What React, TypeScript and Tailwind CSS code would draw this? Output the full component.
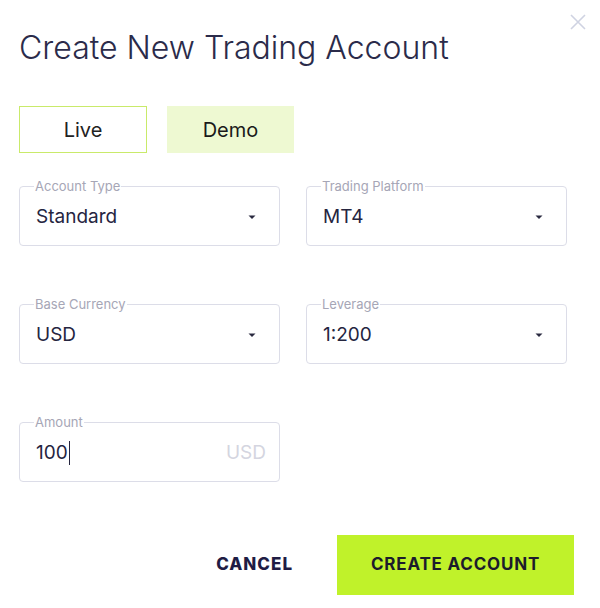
import React from "react";

const font = { fontFamily: "Inter, 'Noto Sans', sans-serif" };

function Caret() {
  return (
    <svg width="10" height="6" viewBox="0 0 10 6" className="shrink-0">
      <path d="M1.5 1.5h7L5 5z" fill="#2a2a40" />
    </svg>
  );
}

function Field({
  label,
  value,
  select = true,
  suffix,
  caret = false,
}: {
  label: string;
  value: string;
  select?: boolean;
  suffix?: string;
  caret?: boolean;
}) {
  return (
    <fieldset className="h-[68px] w-[261px] rounded-[4px] border border-[#dcdde8] pl-[16px] pr-[22px]">
      <legend className="-ml-[2px] px-[1px] text-[13px] leading-[16px] text-[#a6a6b6]">{label}</legend>
      <div className="mt-[2px] flex h-[42px] items-center justify-between">
        <span className="flex items-center text-[19px] text-[#25253f]">
          {value}
          {caret && <span className="ml-[1px] inline-block h-[24px] w-[1.5px] bg-[#25253f]" />}
        </span>
        {select && <Caret />}
        {suffix && <span className="-mr-[9px] text-[19px] text-[#d4d5e0]">{suffix}</span>}
      </div>
    </fieldset>
  );
}

export default function App() {
  return (
    <div className="relative h-[608px] w-[600px] bg-white" style={font}>
      <button className="absolute right-[12px] top-[12px] text-[#cfd3e2]">
        <svg width="20" height="20" viewBox="0 0 20 20">
          <path d="M3 3l14 14M17 3L3 17" stroke="currentColor" strokeWidth="1.6" />
        </svg>
      </button>

      <div className="px-[19px] pt-[26px]">
        <h1 className="text-[32px] font-light leading-[44px] text-[#2b2b4a]">
          Create New Trading Account
        </h1>

        <div className="mt-[36px] flex gap-[20px]">
          <button className="h-[47px] w-[128px] border-[1.5px] border-[#c9ea6a] text-[20px] text-[#222]">
            Live
          </button>
          <button className="h-[47px] w-[127px] bg-[#eef9d2] text-[20px] text-[#1a1a1a]">Demo</button>
        </div>

        <div className="mt-[25px] grid grid-cols-[261px_261px] gap-x-[26px] gap-y-[50px]">
          <Field label="Account Type" value="Standard" />
          <Field label="Trading Platform" value="MT4" />
          <Field label="Base Currency" value="USD" />
          <Field label="Leverage" value="1:200" />
          <Field label="Amount" value="100" select={false} suffix="USD" caret />
        </div>

        <div className="mt-[53px] flex items-center justify-end gap-[44px] pr-[7px]">
          <button className="text-[17px] font-extrabold tracking-[1px] text-[#1f1c44]">CANCEL</button>
          <button className="h-[60px] w-[237px] bg-[#c0f22a] text-[17px] font-bold tracking-[0.8px] text-[#1c1c2c]">
            CREATE ACCOUNT
          </button>
        </div>
      </div>
    </div>
  );
}
